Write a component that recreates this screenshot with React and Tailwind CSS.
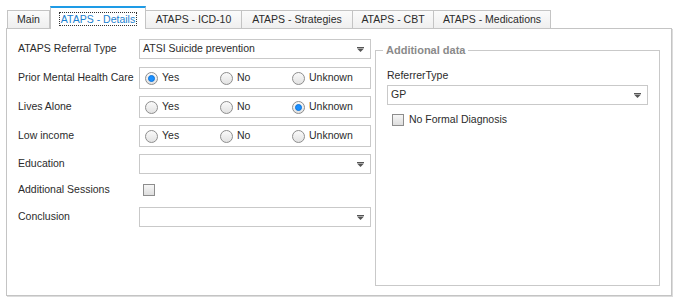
import React from 'react'

const tabs = [
  { label: 'Main', w: 'w-[43px]' },
  { label: 'ATAPS - Details', w: 'w-[96px]', active: true },
  { label: 'ATAPS - ICD-10', w: 'w-[97px]' },
  { label: 'ATAPS - Strategies', w: 'w-[112px]' },
  { label: 'ATAPS - CBT', w: 'w-[82px]' },
  { label: 'ATAPS - Medications', w: 'w-[118px]' },
]

function Arrow() {
  return (
    <svg width="7" height="5" viewBox="0 0 7 5" className="text-[#555]">
      <rect x="0" y="0" width="7" height="1" fill="currentColor" />
      <path d="M0 1.5h7L3.5 5z" fill="currentColor" />
    </svg>
  )
}

function Combo({ value, className = 'w-[232px]' }) {
  return (
    <div className={`flex h-[20px] items-center justify-between border border-[#c9c9c9] bg-white pl-[3px] pr-[6px] ${className}`}>
      <span>{value}</span>
      <Arrow />
    </div>
  )
}

function Radio({ checked, label, className }) {
  return (
    <div className={`flex items-center gap-[4px] ${className}`}>
      <span className="flex h-[13px] w-[13px] items-center justify-center rounded-full border border-[#8d8d8d] bg-gradient-to-b from-[#fafafa] to-[#e2e2e2]">
        {checked && <span className="h-[7px] w-[7px] rounded-full border border-[#0e74d8] bg-[#1a8fff]" />}
      </span>
      <span>{label}</span>
    </div>
  )
}

function RadioGroup({ value }) {
  return (
    <div className="flex h-[22px] w-[232px] items-center border border-[#c9c9c9] bg-white pl-[5px]">
      <Radio checked={value === 'Yes'} label="Yes" className="w-[75px]" />
      <Radio checked={value === 'No'} label="No" className="w-[72px]" />
      <Radio checked={value === 'Unknown'} label="Unknown" />
    </div>
  )
}

function Check() {
  return <span className="block h-[12px] w-[12px] border border-[#8d8d8d] bg-gradient-to-b from-[#f6f6f6] to-[#dedede]" />
}

function Row({ label, className = '', children }) {
  return (
    <div className={`flex items-center ${className}`}>
      <span className="w-[121px]">{label}</span>
      {children}
    </div>
  )
}

export default function App() {
  return (
    <div
      className="h-[302px] w-[678px] bg-white text-[10.5px] text-[#2b2b2b]"
      style={{ fontFamily: '"Liberation Sans", Arial, sans-serif' }}
    >
      <div className="flex items-end pl-[7px] pt-[6px]">
        {tabs.map(t =>
          t.active ? (
            <div
              key={t.label}
              className={`relative z-10 -mb-px flex h-[23px] items-center justify-center border-x border-t-2 border-x-[#c4c4c4] border-t-[#1e9be6] bg-white text-[#1c7fd0] ${t.w}`}
            >
              <span className="px-[1px] outline outline-1 outline-dotted outline-[#333] leading-[12px]">{t.label}</span>
            </div>
          ) : (
            <div
              key={t.label}
              className={`-ml-px flex h-[18px] items-center justify-center border border-b-0 border-[#c4c4c4] bg-gradient-to-b from-[#fbfbfb] to-[#efefef] first:ml-0 ${t.w}`}
            >
              {t.label}
            </div>
          )
        )}
      </div>

      <div className="ml-[6px] flex h-[268px] w-[666px] gap-[4px] border border-[#c4c4c4] pl-[11px] pt-[10px] shadow-[1px_1px_0_#dcdcdc]">
        <div className="flex flex-col">
          <Row label="ATAPS Referral Type" className="h-[20px]">
            <Combo value="ATSI Suicide prevention" />
          </Row>
          <Row label="Prior Mental Health Care" className="mt-[8px] h-[22px]">
            <RadioGroup value="Yes" />
          </Row>
          <Row label="Lives Alone" className="mt-[7px] h-[22px]">
            <RadioGroup value="Unknown" />
          </Row>
          <Row label="Low income" className="mt-[7px] h-[22px]">
            <RadioGroup value="" />
          </Row>
          <Row label="Education" className="mt-[7px] h-[20px]">
            <Combo value="" />
          </Row>
          <Row label="Additional Sessions" className="mt-[6px] h-[20px]">
            <span className="pl-[4px]">
              <Check />
            </span>
          </Row>
          <Row label="Conclusion" className="mt-[7px] h-[20px]">
            <Combo value="" />
          </Row>
        </div>

        <fieldset className="mt-[3px] h-[244px] w-[283px] border border-[#c9c9c9] px-[11px]">
          <legend className="-ml-[4px] px-[3px] text-[11px] font-bold text-[#8a8a8a]">Additional data</legend>
          <div className="mt-[9px]">ReferrerType</div>
          <Combo value="GP" className="mt-[2px] w-[261px]" />
          <div className="mt-[7px] flex items-center gap-[5px] pl-[5px]">
            <Check />
            <span>No Formal Diagnosis</span>
          </div>
        </fieldset>
      </div>
    </div>
  )
}
